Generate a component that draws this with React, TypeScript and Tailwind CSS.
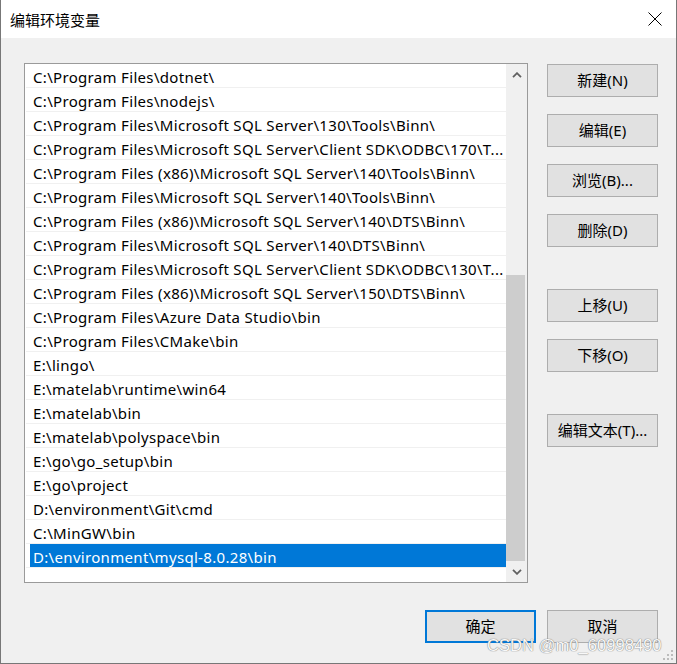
import React from "react";

const rows: string[] = [
  "C:\\Program Files\\dotnet\\",
  "C:\\Program Files\\nodejs\\",
  "C:\\Program Files\\Microsoft SQL Server\\130\\Tools\\Binn\\",
  "C:\\Program Files\\Microsoft SQL Server\\Client SDK\\ODBC\\170\\T...",
  "C:\\Program Files (x86)\\Microsoft SQL Server\\140\\Tools\\Binn\\",
  "C:\\Program Files\\Microsoft SQL Server\\140\\Tools\\Binn\\",
  "C:\\Program Files (x86)\\Microsoft SQL Server\\140\\DTS\\Binn\\",
  "C:\\Program Files\\Microsoft SQL Server\\140\\DTS\\Binn\\",
  "C:\\Program Files\\Microsoft SQL Server\\Client SDK\\ODBC\\130\\T...",
  "C:\\Program Files (x86)\\Microsoft SQL Server\\150\\DTS\\Binn\\",
  "C:\\Program Files\\Azure Data Studio\\bin",
  "C:\\Program Files\\CMake\\bin",
  "E:\\lingo\\",
  "E:\\matelab\\runtime\\win64",
  "E:\\matelab\\bin",
  "E:\\matelab\\polyspace\\bin",
  "E:\\go\\go_setup\\bin",
  "E:\\go\\project",
  "D:\\environment\\Git\\cmd",
  "C:\\MinGW\\bin",
  "D:\\environment\\mysql-8.0.28\\bin",
];

const FONT = "font-['Noto_Sans','Noto_Sans_CJK_SC',sans-serif]";

function Btn({ label, className = "" }: { label: string; className?: string }) {
  return (
    <div
      className={`w-[111px] h-[33px] bg-[#e1e1e1] border border-[#adadad] flex items-center justify-center text-[15px] text-black leading-none ${className}`}
    >
      {label}
    </div>
  );
}

export default function App() {
  return (
    <div
      className={`relative w-[677px] h-[664px] bg-[#f0f0f0] border-l border-r border-b border-[#777777] overflow-hidden ${FONT}`}
    >
      {/* Title bar */}
      <div className="h-[38px] bg-white flex items-center justify-between pl-[9px] pr-[14px]">
        <span className="text-[15px] text-black font-['Noto_Sans_CJK_SC',sans-serif] leading-none">
          编辑环境变量
        </span>
        <svg width="14" height="14" viewBox="0 0 14 14">
          <path d="M0.5 0.5 L13.5 13.5 M13.5 0.5 L0.5 13.5" stroke="#000" strokeWidth="1" />
        </svg>
      </div>

      {/* Body */}
      <div className="pl-[23px] pt-[25px]">
        <div className="flex">
          {/* List */}
          <div className="w-[504px] h-[520px] bg-white border border-[#9a9a9a] flex">
            <div className="flex-1 pl-[1px] flex flex-col">
              {rows.map((r, i) => {
                const sel = i === rows.length - 1;
                return (
                  <div key={i} className="h-[24px] border-b border-[#f0f0f0] flex">
                    <div
                      className={`flex-1 ml-[4px] pl-[3px] pt-[3px] flex items-center whitespace-nowrap overflow-hidden text-[15px] tracking-[0.32px] ${
                        sel ? "bg-[#0078d7] text-white" : "text-black"
                      }`}
                    >
                      {r}
                    </div>
                  </div>
                );
              })}
            </div>
            {/* Scrollbar */}
            <div className="w-[21px] bg-[#f0f0f0] flex flex-col">
              <div className="h-[21px] flex items-center justify-center">
                <svg width="10" height="6" viewBox="0 0 10 6">
                  <path d="M1 5.2 L5 1.2 L9 5.2" stroke="#606060" strokeWidth="1.8" fill="none" />
                </svg>
              </div>
              <div className="flex-1 flex flex-col">
                <div className="mt-[190px] flex-1 w-[19px] bg-[#cdcdcd]" />
              </div>
              <div className="h-[21px] flex items-center justify-center">
                <svg width="10" height="6" viewBox="0 0 10 6">
                  <path d="M1 0.8 L5 4.8 L9 0.8" stroke="#606060" strokeWidth="1.8" fill="none" />
                </svg>
              </div>
            </div>
          </div>

          {/* Right buttons */}
          <div className="ml-[19px] pt-[1px] flex flex-col">
            <Btn label="新建(N)" />
            <Btn label="编辑(E)" className="mt-[17px]" />
            <Btn label="浏览(B)..." className="mt-[17px]" />
            <Btn label="删除(D)" className="mt-[17px]" />
            <Btn label="上移(U)" className="mt-[42px]" />
            <Btn label="下移(O)" className="mt-[17px]" />
            <Btn label="编辑文本(T)..." className="mt-[42px]" />
          </div>
        </div>

        {/* Bottom buttons */}
        <div className="mt-[27px] flex justify-end pr-[18px] gap-[11px]">
          <div className="w-[111px] h-[33px] bg-[#e1e1e1] border-2 border-[#0078d7] flex items-center justify-center text-[15px] text-black leading-none">
            确定
          </div>
          <Btn label="取消" />
        </div>
      </div>

      {/* Watermark */}
      <div className="absolute left-[486px] top-[635px] text-[16.6px] leading-[22px] font-['Liberation_Sans',sans-serif] text-[#f8f8f8] [text-shadow:0_0_1px_#7a7a7a,0_0_1px_#8a8a8a] whitespace-nowrap">
        CSDN @m0_60998490
      </div>

      {/* Resize grip */}
      <svg className="absolute right-[2px] bottom-[2px]" width="11" height="11" viewBox="0 0 11 11">
        <rect x="8" y="0" width="2" height="2" fill="#bcbcbc" />
        <rect x="4" y="4" width="2" height="2" fill="#bcbcbc" />
        <rect x="8" y="4" width="2" height="2" fill="#bcbcbc" />
        <rect x="0" y="8" width="2" height="2" fill="#bcbcbc" />
        <rect x="4" y="8" width="2" height="2" fill="#bcbcbc" />
        <rect x="8" y="8" width="2" height="2" fill="#bcbcbc" />
      </svg>
    </div>
  );
}
